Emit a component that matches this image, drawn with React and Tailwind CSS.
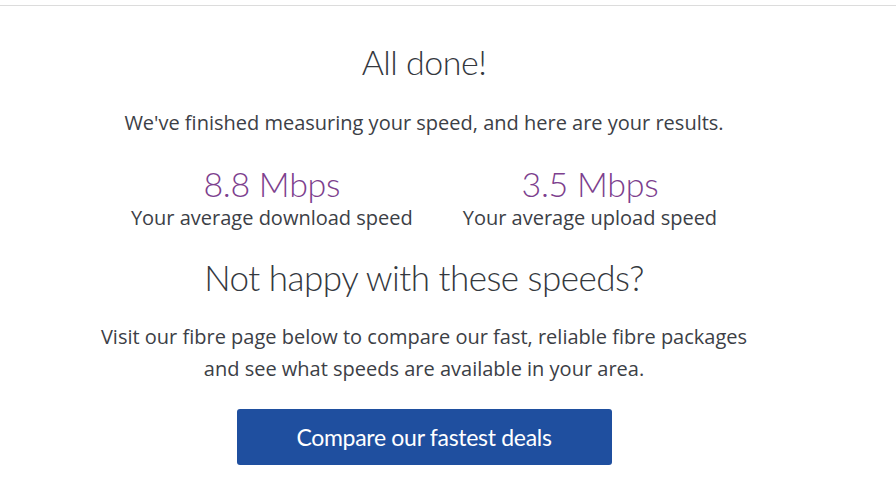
export default function App() {
  return (
    <div className="min-h-screen bg-white">
      <div className="border-b border-[#dcdcdc] h-[6px]" />
      <div className="w-[848px] flex flex-col items-center text-[#3c4046]">
        <h1 className="mt-[36px] text-[34px] leading-[40px] font-['Lato'] font-light tracking-[-0.5px] text-[#34383e]">
          All done!
        </h1>
        <p className="mt-[28px] text-[20px] leading-[26px] font-['Open_Sans']">
          We've finished measuring your speed, and here are your results.
        </p>
        <div className="mt-[29px] flex justify-center gap-[50px]">
          <div className="flex flex-col items-center">
            <span className="text-[34px] leading-[38px] font-['Lato'] font-light tracking-[-0.3px] text-[#7d3f8e]">8.8 Mbps</span>
            <span className="mt-[2px] text-[20px] leading-[26px] font-['Open_Sans']">Your average download speed</span>
          </div>
          <div className="flex flex-col items-center">
            <span className="text-[34px] leading-[38px] font-['Lato'] font-light tracking-[-0.3px] text-[#7d3f8e]">3.5 Mbps</span>
            <span className="mt-[2px] text-[20px] leading-[26px] font-['Open_Sans']">Your average upload speed</span>
          </div>
        </div>
        <h2 className="mt-[26px] text-[35px] leading-[40px] font-['Lato'] font-light tracking-[-0.5px] text-[#34383e]">
          Not happy with these speeds?
        </h2>
        <p className="mt-[24px] text-[20px] leading-[32px] font-['Open_Sans'] text-center">
          Visit our fibre page below to compare our fast, reliable fibre packages
          <br />
          and see what speeds are available in your area.
        </p>
        <button className="mt-[24px] w-[375px] h-[56px] rounded-[3px] bg-[#1f4f9f] text-white text-[23px] font-['Lato'] tracking-[-0.3px]">
          Compare our fastest deals
        </button>
      </div>
    </div>
  );
}
